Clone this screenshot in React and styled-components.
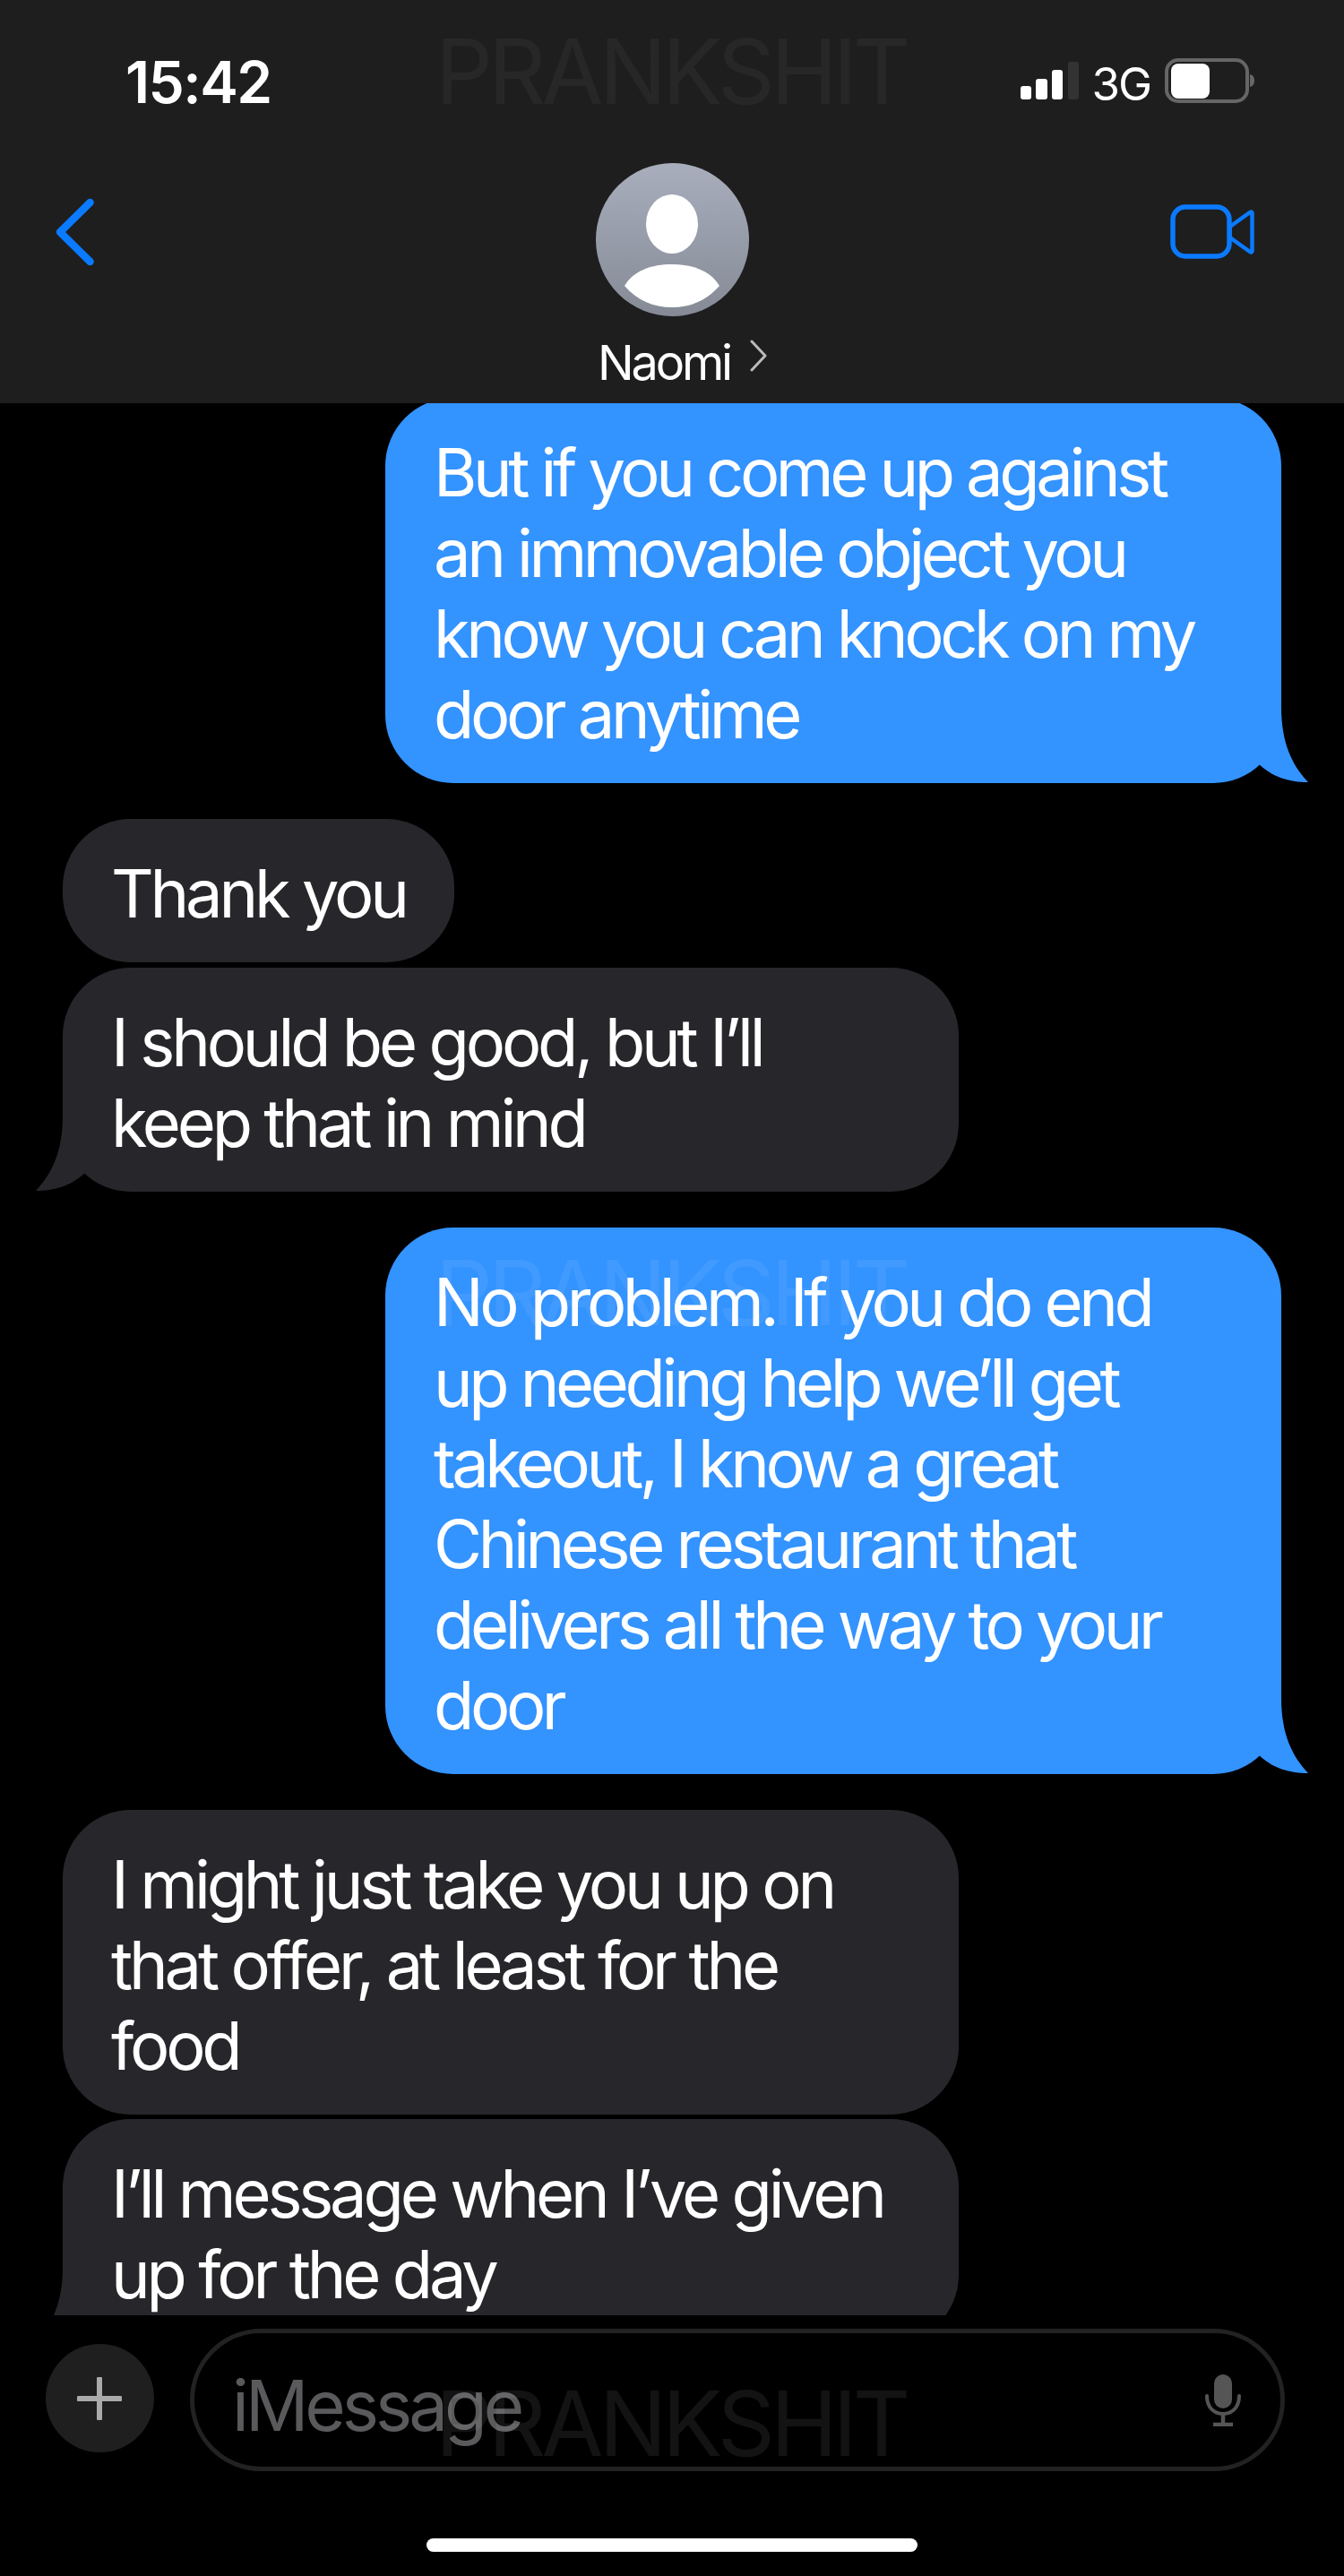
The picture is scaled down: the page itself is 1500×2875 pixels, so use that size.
import React from "react";
import styled, { createGlobalStyle } from "styled-components";

const Global = createGlobalStyle`
  html, body { margin: 0; padding: 0; background: #000; }
  * { box-sizing: border-box; }
`;

const FONT = `Inter, "Liberation Sans", sans-serif`;

const Screen = styled.div`
  position: relative;
  width: 1500px;
  height: 2875px;
  background: #000;
  overflow: hidden;
  display: flex;
  flex-direction: column;
  font-family: ${FONT};
  color: #fff;
`;

const Header = styled.header`
  height: 450px;
  flex: none;
  background: #1e1e1e;
  display: flex;
  flex-direction: column;
`;

const StatusBar = styled.div`
  height: 160px;
  flex: none;
  display: flex;
  justify-content: space-between;
  padding: 65px 100px 0 140px;
`;

const Clock = styled.div`
  font-size: 64px;
  font-weight: 600;
  line-height: 54px;
  letter-spacing: -1.5px;
`;

const StatusIcons = styled.div`
  display: flex;
  align-items: flex-start;
`;

const SignalIcon = styled.svg`
  width: 66px;
  height: 46px;
  margin-top: 4px;
`;

const BatteryIcon = styled.svg`
  width: 100px;
  height: 50px;
`;

const NetworkLabel = styled.div`
  font-size: 51px;
  line-height: 46px;
  margin: 6px 16px 0 13px;
  letter-spacing: -2px;
`;

const Nav = styled.div`
  flex: 1;
  display: grid;
  grid-template-columns: 1fr auto 1fr;
  padding: 22px 62px 0 62px;
`;

const BackIcon = styled.svg`
  width: 43px;
  height: 76px;
  margin-top: 39px;
`;

const VideoIcon = styled.svg`
  width: 94px;
  height: 61px;
  margin: 46px 38px 0 0;
  justify-self: end;
`;

const Contact = styled.div`
  display: flex;
  flex-direction: column;
  align-items: center;
`;

const Avatar = styled.svg`
  width: 171px;
  height: 171px;
  display: block;
`;

const ContactName = styled.div`
  position: relative;
  left: 12px;
  display: flex;
  align-items: flex-start;
  gap: 22px;
  margin-top: 24px;
  font-size: 54px;
  line-height: 56px;
  letter-spacing: -3.2px;
`;

const NameChevron = styled.svg`
  width: 20px;
  height: 36px;
  margin-top: 2px;
`;

const Messages = styled.main`
  height: 2134px;
  flex: none;
  overflow: hidden;
  display: flex;
  flex-direction: column;
  padding: 0 70px;
`;

const Bubble = styled.div`
  position: relative;
  flex: none;
  align-self: ${(p) => (p.$out ? "flex-end" : "flex-start")};
  width: ${(p) => p.$width || 1000}px;
  margin-top: ${(p) => p.$top}px;
  padding: 38px 54px 32px;
  border-radius: 76px;
  background: ${(p) => (p.$out ? "#3393ff" : "#27272b")};
  font-size: 74px;
  line-height: 90px;
  letter-spacing: ${(p) => (p.$out ? -4.4 : -4.2)}px;
`;

const Line = styled.div`
  white-space: nowrap;
`;

const Tail = styled.svg`
  position: absolute;
  bottom: 0;
  width: 62px;
  height: 85px;
  ${(p) => (p.$out ? "right: -32px;" : "left: -32px; transform: scaleX(-1);")}
`;

const Composer = styled.div`
  display: flex;
  align-items: flex-start;
  padding: 15px 66px 0 51px;
  gap: 40px;
  flex: none;
`;

const PlusButton = styled.div`
  width: 121px;
  height: 121px;
  flex: none;
  margin-top: 17px;
  padding-right: 2px;
  border-radius: 50%;
  background: #1f1f1f;
  display: flex;
  align-items: center;
  justify-content: center;
`;

const InputPill = styled.div`
  flex: 1;
  height: 159px;
  border: 5px solid #222;
  border-radius: 80px;
  display: flex;
  align-items: center;
  justify-content: space-between;
  padding: 0 43px 0 42px;
`;

const Placeholder = styled.div`
  color: #5a5a5c;
  font-size: 78px;
  line-height: 90px;
  letter-spacing: -4px;
  padding-top: 12px;
`;

const HomeIndicator = styled.div`
  width: 548px;
  height: 15px;
  margin: 75px auto 0;
  border-radius: 8px;
  background: #fff;
  flex: none;
`;

const Watermark = styled.div`
  position: absolute;
  left: 486px;
  top: ${(p) => p.$top}px;
  width: 530px;
  font-size: 100px;
  line-height: 72px;
  letter-spacing: -4.8px;
  white-space: nowrap;
  pointer-events: none;
  color: ${(p) => p.$color};
`;

const TailShape = ({ out, fill }) => (
  <Tail $out={out} viewBox="0 0 62 85" aria-hidden="true">
    <path
      fill={fill}
      d="M30 0 C30 40 42 65 60 84 C40 84 20 79 3 62 L0 0 Z"
    />
  </Tail>
);

const threads = [
  {
    out: true,
    top: -6,
    tail: true,
    lines: [
      "But if you come up against",
      "an immovable object you",
      "know you can knock on my",
      "door anytime",
    ],
  },
  { top: 40, width: 437, lines: ["Thank you"] },
  {
    top: 6,
    tail: true,
    lines: ["I should be good, but I’ll", "keep that in mind"],
  },
  {
    out: true,
    top: 40,
    tail: true,
    lines: [
      "No problem. If you do end",
      "up needing help we’ll get",
      "takeout, I know a great",
      "Chinese restaurant that",
      "delivers all the way to your",
      "door",
    ],
  },
  {
    top: 40,
    lines: ["I might just take you up on", "that offer, at least for the", "food"],
  },
  {
    top: 5,
    tail: true,
    lines: ["I’ll message when I’ve given", "up for the day"],
  },
];

export default function App() {
  return (
    <Screen>
      <Global />
      <Header>
        <StatusBar>
          <Clock>15:42</Clock>
          <StatusIcons>
            <SignalIcon viewBox="0 0 66 46" aria-hidden="true">
              <rect x="0" y="27" width="12" height="15" rx="3" fill="#fff" />
              <rect x="17" y="19" width="13" height="23" rx="3" fill="#fff" />
              <rect x="35" y="9" width="12" height="33" rx="3" fill="#fff" />
              <rect x="53" y="0" width="12" height="42" rx="3" fill="#333" />
            </SignalIcon>
            <NetworkLabel>3G</NetworkLabel>
            <BatteryIcon viewBox="0 0 100 50" aria-hidden="true">
              <rect x="2" y="2" width="90" height="46" rx="13" fill="none" stroke="#666" strokeWidth="4" />
              <rect x="7" y="6" width="43" height="39" rx="8" fill="#fff" />
              <path d="M95 18 C99 19 100 22 100 25 C100 28 99 31 95 32 Z" fill="#666" />
            </BatteryIcon>
          </StatusIcons>
        </StatusBar>
        <Nav>
          <BackIcon viewBox="0 0 43 76" aria-hidden="true">
            <path d="M38.5 5 L5 38 L38.5 71" fill="none" stroke="#0a7aff" strokeWidth="8.5" strokeLinecap="round" strokeLinejoin="round" />
          </BackIcon>
          <Contact>
            <Avatar viewBox="0 0 171 171" aria-hidden="true">
              <defs>
                <linearGradient id="avatarFill" x1="0" y1="0" x2="0" y2="1">
                  <stop offset="0" stopColor="#a9aebd" />
                  <stop offset="1" stopColor="#858a96" />
                </linearGradient>
              </defs>
              <circle cx="85.5" cy="85.5" r="85.5" fill="url(#avatarFill)" />
              <ellipse cx="85" cy="68" rx="29" ry="33" fill="#fff" />
              <path d="M32 137 C42 120 62 113 85 113 C108 113 128 120 138 137 C124 153 106 161 85 161 C64 161 46 153 32 137 Z" fill="#fff" />
            </Avatar>
            <ContactName>
              Naomi
              <NameChevron viewBox="0 0 20 36" aria-hidden="true">
                <path d="M2 2 L17 18 L2 34" fill="none" stroke="#bbb" strokeWidth="3" strokeLinecap="round" strokeLinejoin="round" />
              </NameChevron>
            </ContactName>
          </Contact>
          <VideoIcon viewBox="0 0 94 61" aria-hidden="true">
            <rect x="3" y="3" width="63" height="55" rx="14" fill="none" stroke="#0a7aff" strokeWidth="5.5" />
            <path d="M68 24 L89 9 C90.5 8 91.5 8.5 91.5 10 L91.5 52 C91.5 53.5 90.5 54 89 53 L68 38 C66 36 66 26 68 24 Z" fill="none" stroke="#0a7aff" strokeWidth="4.5" strokeLinejoin="round" />
          </VideoIcon>
        </Nav>
      </Header>

      <Messages>
        {threads.map((m, i) => (
          <Bubble key={i} $out={m.out} $top={m.top} $width={m.width}>
            {m.lines.map((l) => (
              <Line key={l}>{l}</Line>
            ))}
            {m.tail && <TailShape out={m.out} fill={m.out ? "#3393ff" : "#27272b"} />}
          </Bubble>
        ))}
      </Messages>

      <Composer>
        <PlusButton>
          <svg width="50" height="48" viewBox="0 0 50 48" aria-hidden="true">
            <path d="M25 2 V46 M2 24 H48" stroke="#aaa" strokeWidth="6" strokeLinecap="round" />
          </svg>
        </PlusButton>
        <InputPill>
          <Placeholder>iMessage</Placeholder>
          <svg width="42" height="58" viewBox="0 0 42 58" aria-hidden="true">
            <rect x="11" y="0" width="20" height="38" rx="10" fill="#555" />
            <path d="M3 24 C3 36 10 44 21 44 C32 44 39 36 39 24" fill="none" stroke="#555" strokeWidth="4" strokeLinecap="round" />
            <path d="M21 44 V55 M10 56 H32" stroke="#555" strokeWidth="4.5" />
          </svg>
        </InputPill>
      </Composer>
      <HomeIndicator />

      <Watermark $top={44} $color="rgba(255,255,255,0.045)">PRANKSHIT</Watermark>
      <Watermark $top={1407} $color="rgba(255,255,255,0.07)">PRANKSHIT</Watermark>
      <Watermark $top={2669} $color="rgba(255,255,255,0.075)">PRANKSHIT</Watermark>
    </Screen>
  );
}
